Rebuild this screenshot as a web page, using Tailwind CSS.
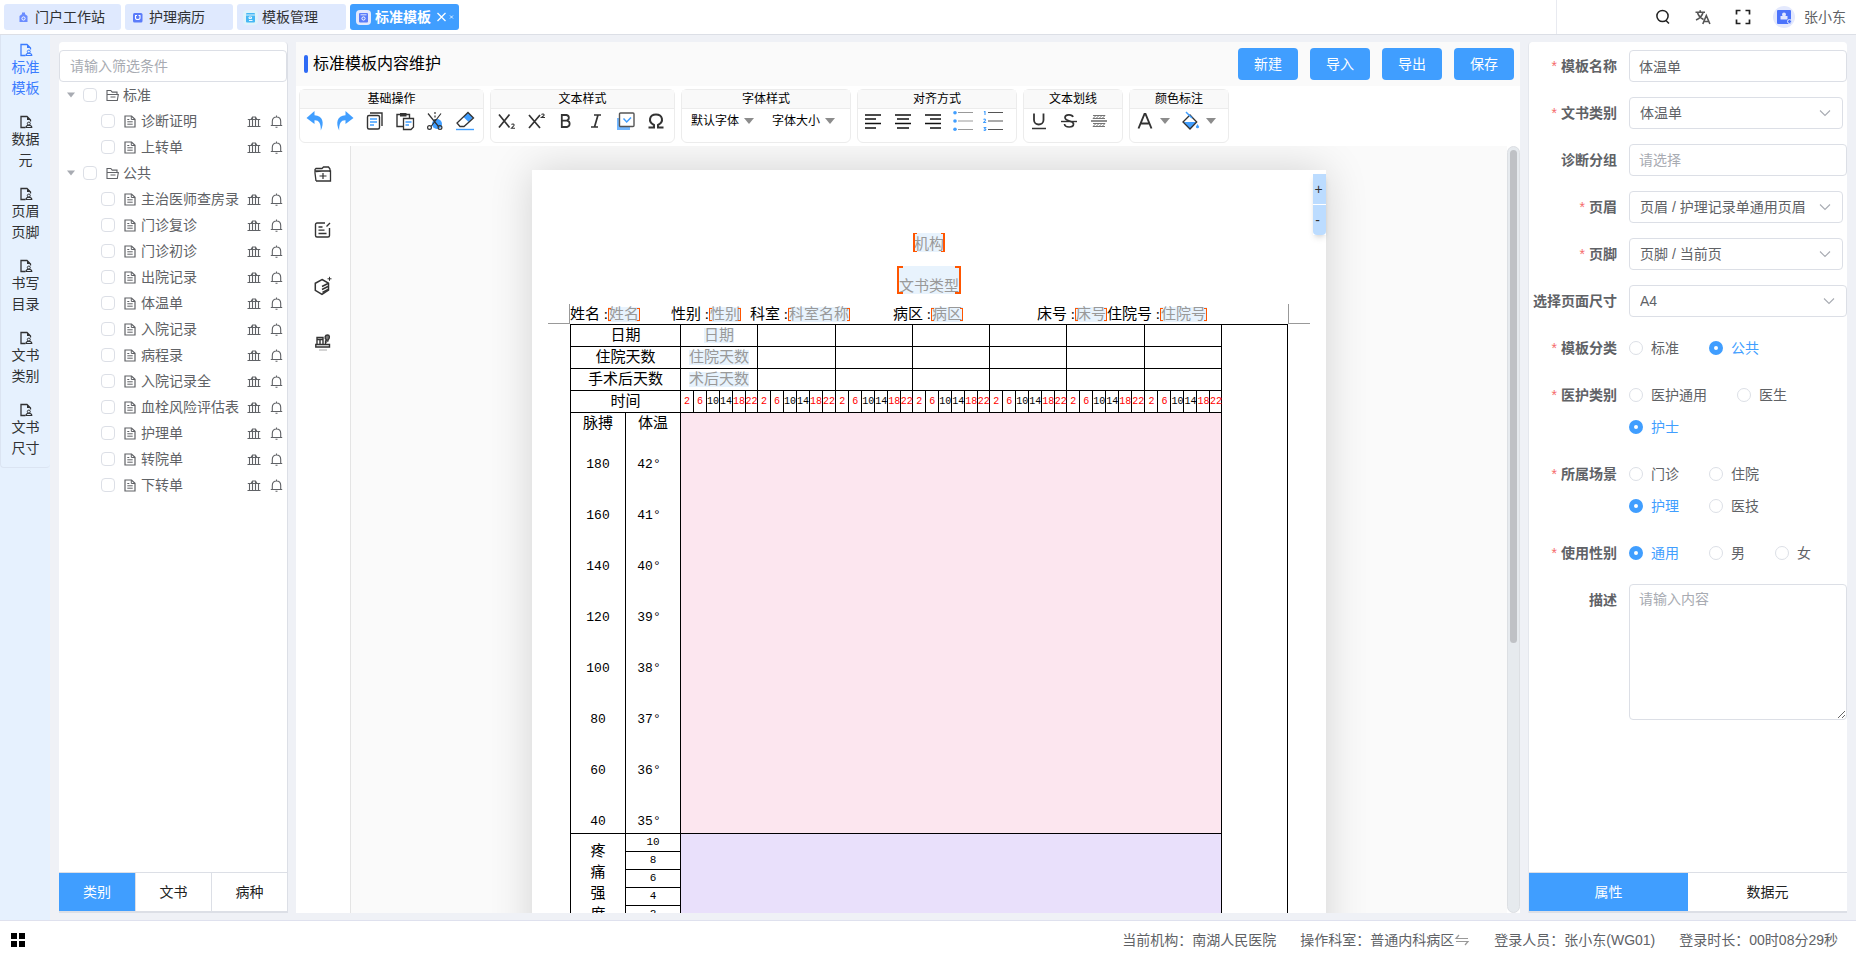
<!DOCTYPE html>
<html lang="zh-CN">
<head>
<meta charset="utf-8">
<title>标准模板</title>
<script src="https://cdn.jsdelivr.net/npm/@tailwindcss/browser@4"></script>
</head>
<body class="flex h-screen flex-col overflow-hidden bg-[#eff1f6] font-['Liberation_Sans','Noto_Sans_CJK_SC',sans-serif] text-sm text-[#606266]">

<svg class="hidden" aria-hidden="true">
  <symbol id="i-nav" viewBox="0 0 14 14"><path d="M6.500 12.500H2V1.500H8L11.500 5V6.500" fill="none" stroke="currentColor" stroke-width="1.300"/><path d="M8 1.500V5h3.500z" fill="currentColor"/><circle cx="9.800" cy="8.600" r="1.500" fill="none" stroke="currentColor"/><path d="M7 12.500h5.800c0-1.500-1-2.200-3-2.200s-2.800.7-2.800 2.200z" fill="none" stroke="currentColor" stroke-width="1.100"/></symbol>
  <symbol id="i-folder" viewBox="0 0 13 13"><path d="M1 11.500V1.500h3.800l1.400 1.600h4.800V5M1 11.500V5.500H12.300L11.300 11.500zM4.500 8h5" fill="none" stroke="currentColor" stroke-width="1.100"/></symbol>
  <symbol id="i-doc" viewBox="0 0 12 13"><path d="M1 1h6.500L11 4.300V12H1z" fill="none" stroke="currentColor" stroke-width="1.200"/><path d="M7.300 1v3.500H11M3.300 4.500h2M3.300 6.800h5.400M3.300 9.200h5.400" fill="none" stroke="currentColor"/></symbol>
  <symbol id="i-bank" viewBox="0 0 14 13"><path d="M0.500 11.500h13M0.800 4.500h12.400M2.500 4.500v7M5.500 2.500v9M8.500 2.500v9M11.500 4.500v7M4 4.500L5.500 2h3L10 4.500" fill="none" stroke="currentColor" stroke-width="1.100"/></symbol>
  <symbol id="i-bell" viewBox="0 0 13 13"><path d="M0.800 10.500h11.400M2.300 10.500V6.500C2.300 3.500 4 2 6.500 2s4.200 1.500 4.200 4.500v4M6.500 0.500V2M5.500 12.300h2" fill="none" stroke="currentColor" stroke-width="1.100"/></symbol>
  <symbol id="i-chev" viewBox="0 0 12 12"><path d="M1 3.500l5 5 5-5" fill="none" stroke="#a8abb2" stroke-width="1.100"/></symbol>
  <symbol id="i-tri" viewBox="0 0 10 6"><path d="M0 0h10L5 6z" fill="#8c8c8c"/></symbol>
</svg>

<header class="flex h-[35px] shrink-0 items-center border-b border-[#dcdfe6] bg-white">
  <nav class="flex grow gap-1 self-stretch px-1 pt-1 pb-1 text-[#303133]">
    <a href="#" class="flex h-[26px] items-center gap-1 rounded-[3px] bg-[#dfe9fe] pr-4 pl-3"><svg class="size-[15px]" viewBox="0 0 15 15"><path d="M7.500 3L11.500 6V12H3.500V6z" fill="#6b8cff"/><rect x="6" y="2.500" width="3" height="2" fill="#6b8cff"/><circle cx="7.500" cy="8.500" r="1.600" fill="none" stroke="#fff"/></svg>门户工作站</a>
    <a href="#" class="flex h-[26px] items-center gap-1 rounded-[3px] bg-[#dfe9fe] pr-7 pl-[5px]"><svg class="size-[15px]" viewBox="0 0 15 15"><rect x="3" y="3" width="9.500" height="9.500" rx="1.500" fill="#5b7cfa"/><path d="M5.500 6v2c0 2 4.500 2 4.500 0V6M5 5.500h2M8.500 5.500h2" fill="none" stroke="#fff" stroke-width="1.100"/></svg>护理病历</a>
    <a href="#" class="flex h-[26px] items-center gap-1 rounded-[3px] bg-[#dfe9fe] pr-7 pl-1.5"><svg class="size-[15px]" viewBox="0 0 15 15"><rect width="15" height="15" rx="4" fill="#dff3fb"/><rect x="3" y="3" width="9" height="9.500" rx="1" fill="#45b8f5"/><path d="M3 5h9" stroke="#dff3fb"/><path d="M6 7h2.500v1.500H6zM6 10.500h3.500" fill="none" stroke="#fff" stroke-width=".9"/></svg>模板管理</a>
    <a href="#" aria-current="page" class="flex h-[26px] w-[109px] items-center gap-1 rounded-[3px] bg-[#409eff] pl-1.5 font-bold whitespace-nowrap text-white"><svg class="size-[15px] shrink-0" viewBox="0 0 15 15"><rect width="15" height="15" rx="4" fill="#e4e9fd"/><rect x="3" y="3" width="9" height="9.500" rx="1" fill="#5b7cfa"/><path d="M4.500 4.800h6" stroke="#fff" stroke-width=".8"/><circle cx="7.500" cy="8.500" r="1.600" fill="none" stroke="#fff"/></svg>标准模板<svg class="h-3 w-5 shrink-0" viewBox="0 0 20 12"><path d="M2.500 2l8 8M10.500 2l-8 8" stroke="#fff" stroke-width="1.300"/><path d="M15 4.500l3 3M18 4.500l-3 3" stroke="#fff" stroke-width=".8"/></svg></a>
  </nav>
  <div class="flex w-[300px] items-center gap-3 self-stretch border-l border-[#e8eaf0] pr-[10px] text-[#222]">
    <button aria-label="搜索" class="ml-auto flex w-7 justify-center"><svg class="size-4" viewBox="0 0 16 16"><circle cx="7.500" cy="7" r="5.600" fill="none" stroke="currentColor" stroke-width="1.500"/><path d="M11 11.500l3 3" stroke="currentColor" stroke-width="1.500"/></svg></button>
    <button aria-label="语言" class="flex w-7 justify-center text-[#555]"><svg class="size-4" viewBox="0 0 16 16"><path d="M0.500 3.200h9.500M5.200 1.200v2M2.500 3.500c.8 3 3 5.500 6 7M8 3.500C7.200 7 4.500 9.500 1 11M7.800 15l3.500-8.500L14.900 15M9 12.500h4.800" fill="none" stroke="currentColor" stroke-width="1.600"/></svg></button>
    <button aria-label="全屏" class="flex w-7 justify-center"><svg class="size-4" viewBox="0 0 16 16"><path d="M1.500 5.500v-4h4M10.500 1.500h4v4M14.500 10.500v4h-4M5.500 14.500h-4v-4" fill="none" stroke="currentColor" stroke-width="1.700"/></svg></button>
    <button class="flex items-center gap-[9px] pl-1 text-[#606266]"><svg class="size-[22px]" viewBox="0 0 22 22"><circle cx="11" cy="11" r="11" fill="#e4e9fd"/><rect x="4" y="4" width="14" height="14" rx="1" fill="#4b73fb"/><path d="M7.500 13.500h7V10H7.500z" fill="#dfe6ff"/><circle cx="11" cy="8.500" r="2" fill="#dfe6ff"/><circle cx="16.500" cy="15.500" r="2" fill="#4b73fb" stroke="#dfe6ff"/></svg>张小东</button>
  </div>
</header>

<div class="flex min-h-0 grow">
  <!-- 左侧模块导航 -->
  <nav class="w-[50px] shrink-0 bg-[#e6f1fe] text-[#303133]">
    <ul id="modules" class="flex flex-col gap-4 rounded-b border-b border-l border-[#dbe4f2] pt-2 pb-2 text-center leading-[21px]"></ul>
  </nav>

  <div class="flex min-w-0 grow py-[7px] pr-[9px] pl-[9px]">
    <!-- 模板树 -->
    <aside class="mr-2 flex w-[229px] shrink-0 flex-col rounded-t border-r border-[#dcdfe6] bg-white">
      <input aria-label="筛选" placeholder="请输入筛选条件" class="mt-2 h-8 w-full rounded border border-[#dcdfe6] bg-white px-[10px] text-sm placeholder:text-[#a8abb2]">
      <ul id="tree" class="grow"></ul>
      <div class="grid h-[41px] grid-cols-3 border-t border-b-2 border-[#dcdfe6] text-[#222]">
        <button class="bg-[#409eff] text-white">类别</button>
        <button class="border-l border-[#dcdfe6]">文书</button>
        <button class="border-l border-[#dcdfe6]">病种</button>
      </div>
    </aside>

    <!-- 编辑区 -->
    <main class="mr-2 flex min-w-0 grow flex-col bg-white text-black">
      <div class="flex h-11 shrink-0 items-center gap-3 bg-[#fafafa] pr-1.5 pl-2">
        <h1 class="flex grow items-center gap-[5px] text-base"><span class="h-[18px] w-1 rounded-sm bg-[#2f6bf5]"></span>标准模板内容维护</h1>
        <button class="h-8 w-[60px] rounded bg-[#409eff] text-white">新建</button>
        <button class="h-8 w-[60px] rounded bg-[#409eff] text-white">导入</button>
        <button class="h-8 w-[60px] rounded bg-[#409eff] text-white">导出</button>
        <button class="h-8 w-[60px] rounded bg-[#409eff] text-white">保存</button>
      </div>

      <div class="flex h-[60px] shrink-0 gap-1.5 px-[3px] pt-[3px] pb-[3px] text-xs text-[#333]">
        <section class="w-[185px] rounded-md border border-[#ececec]">
          <h2 class="h-[19px] border-b border-[#ececec] bg-[#f9f9f9] text-center leading-[18px] text-black">基础操作</h2>
          <div class="grid h-6 w-[180px] grid-cols-6 place-items-center">
            <button aria-label="撤销"><svg class="size-5" viewBox="0 0 20 20"><path d="M9.500 0L1.500 7l8 6V9.200c4.500-.2 6.500 3 6.300 10.300C19.500 12 18 4.500 9.500 4.200z" fill="#409eff"/></svg></button>
            <button aria-label="重做"><svg class="size-5" viewBox="0 0 20 20"><path d="M10.500 0l8 7-8 6V9.200c-4.500-.2-6.500 3-6.300 10.300C.5 12 2 4.500 10.500 4.200z" fill="#409eff"/></svg></button>
            <button aria-label="复制"><svg class="size-5" viewBox="0 0 20 20"><rect x="2.500" y="4.500" width="12" height="13.500" rx="1.500" fill="#fff" stroke="#333" stroke-width="1.400"/><path d="M5 2h12v13" fill="none" stroke="#333" stroke-width="1.400"/><path d="M5 8h7M5 11h7M5 14h4" stroke="#409eff" stroke-width="1.400"/></svg></button>
            <button aria-label="粘贴"><svg class="size-5" viewBox="0 0 20 20"><path d="M8 15.500H2V3.500H14.500V7M5 3.500h6" fill="none" stroke="#333" stroke-width="1.400"/><path d="M5 2h6.500v3.500H5z" fill="#333"/><path d="M8.500 7.500H18.500V16l-2.500 2.500H8.500z" fill="#fff" stroke="#333" stroke-width="1.300"/><path d="M10.500 11h6M10.500 14h3.500" stroke="#409eff" stroke-width="1.400"/></svg></button>
            <button aria-label="剪切"><svg class="size-5" viewBox="0 0 20 20"><circle cx="12" cy="13" r="5" fill="#409eff"/><path d="M3 2.500l10.500 13M16 2.500L6 15.500M10 1v2M10 4.500v2M10 8v2" fill="none" stroke="#333" stroke-width="1.200"/><circle cx="4.500" cy="16.500" r="1.900" fill="none" stroke="#333" stroke-width="1.200"/><circle cx="15" cy="16.500" r="1.900" fill="none" stroke="#333" stroke-width="1.200"/></svg></button>
            <button aria-label="橡皮擦"><svg class="size-5" viewBox="0 0 20 20"><path d="M8.500 6L13 1.500l5 5-4.500 4.500z" fill="#409eff"/><path d="M13 1.500l5.500 5.500L9 15.500H5L2 12z" fill="none" stroke="#333" stroke-width="1.300"/><path d="M1 18.500h18" stroke="#409eff" stroke-width="1.400"/></svg></button>
          </div>
        </section>
        <section class="w-[185px] rounded-md border border-[#ececec]">
          <h2 class="h-[19px] border-b border-[#ececec] bg-[#f9f9f9] text-center leading-[18px] text-black">文本样式</h2>
          <div class="grid h-6 w-[180px] grid-cols-6 place-items-center">
            <button aria-label="下标"><svg class="size-5" viewBox="0 0 20 20"><path d="M3 3.500l10.500 13M13.500 3.500L3 16.500" stroke="#333" stroke-width="1.700"/><path d="M15.500 13.500c1-1 3-.5 2.500 1l-2.500 2.700H19" fill="none" stroke="#333" stroke-width="1.100"/></svg></button>
            <button aria-label="上标"><svg class="size-5" viewBox="0 0 20 20"><path d="M3 4l11 13M14 4L3 17" stroke="#333" stroke-width="1.700"/><path d="M15.500 3.500c1-1 3-.5 2.500 1l-2.500 2H19" fill="none" stroke="#333" stroke-width="1.100"/></svg></button>
            <button aria-label="加粗"><svg class="size-5" viewBox="0 0 20 20"><path d="M5.800 4v12H11a3.200 3.200 0 0 0 0-6.300H5.800 10.500a2.900 2.900 0 0 0 0-5.700z" fill="none" stroke="#333" stroke-width="1.800"/></svg></button>
            <button aria-label="斜体"><svg class="size-5" viewBox="0 0 20 20"><path d="M8 4h7M5 16h7M12 4L8.500 16" stroke="#333" stroke-width="1.700"/></svg></button>
            <button aria-label="复选框"><svg class="size-5" viewBox="0 0 20 20"><path d="M1 7h3v9h10v3H1z" fill="#73b7ff"/><rect x="3.500" y="2" width="14.500" height="13.500" rx="1" fill="#fff" stroke="#555" stroke-width="1.400"/><path d="M7.500 7.500l3.200 3.500L15 6.500" fill="none" stroke="#409eff" stroke-width="1.500"/></svg></button>
            <button aria-label="特殊字符"><svg class="size-5" viewBox="0 0 20 20"><path d="M2.500 16.500H8v-2.500C1.500 10.500 3.500 3.500 10 3.500s8.500 7 2 10.500v2.500h5.500" fill="none" stroke="#333" stroke-width="2"/></svg></button>
          </div>
        </section>
        <section class="w-[170px] rounded-md border border-[#ececec]">
          <h2 class="h-[19px] border-b border-[#ececec] bg-[#f9f9f9] text-center leading-[18px] text-black">字体样式</h2>
          <div class="flex h-6 items-center gap-[18px] pl-[9px] whitespace-nowrap text-black">
            <button class="flex items-center gap-[5px]">默认字体<svg class="h-1.5 w-2.5"><use href="#i-tri"/></svg></button>
            <button class="flex items-center gap-[5px]">字体大小<svg class="h-1.5 w-2.5"><use href="#i-tri"/></svg></button>
          </div>
        </section>
        <section class="w-[160px] rounded-md border border-[#ececec]">
          <h2 class="h-[19px] border-b border-[#ececec] bg-[#f9f9f9] text-center leading-[18px] text-black">对齐方式</h2>
          <div class="grid h-6 w-[150px] grid-cols-5 place-items-center">
            <button aria-label="左对齐"><svg class="size-5" viewBox="0 0 20 20"><path d="M2 4h16M2 8h11M2 12.500h16M2 17h11" stroke="#111" stroke-width="1.600"/></svg></button>
            <button aria-label="居中"><svg class="size-5" viewBox="0 0 20 20"><path d="M2 4h16M4 8h12M2 12.500h16M4 17h12" stroke="#111" stroke-width="1.600"/></svg></button>
            <button aria-label="右对齐"><svg class="size-5" viewBox="0 0 20 20"><path d="M2 4h16M7 8h11M2 12.500h16M7 17h11" stroke="#111" stroke-width="1.600"/></svg></button>
            <button aria-label="无序列表"><svg class="size-5" viewBox="0 0 20 20"><path d="M5 1.500h15M5 10h15M5 18.500h15" stroke="#999" stroke-width="1.200"/><circle cx="2" cy="1.800" r="1.800" fill="#409eff"/><circle cx="2" cy="10" r="1.800" fill="#409eff"/><circle cx="2" cy="18.200" r="1.800" fill="#409eff"/></svg></button>
            <button aria-label="有序列表"><svg class="size-5" viewBox="0 0 20 20"><path d="M5 1.500h15M5 10h15M5 18.500h15" stroke="#555" stroke-width="1.200"/><path d="M1 1l1-.8V4M.5 8.500c1-.8 2.500 0 1.800 1L.7 11.500h2.500M.6 16.500h2l-1 1.200c2 .2 1.500 2-.9 1.600" fill="none" stroke="#409eff" stroke-width="1.100"/></svg></button>
          </div>
        </section>
        <section class="w-[100px] rounded-md border border-[#ececec]">
          <h2 class="h-[19px] border-b border-[#ececec] bg-[#f9f9f9] text-center leading-[18px] text-black">文本划线</h2>
          <div class="grid h-6 w-[90px] grid-cols-3 place-items-center">
            <button aria-label="下划线"><svg class="size-5" viewBox="0 0 20 20"><path d="M5 2.500v6.500c0 6 9.500 6 9.500 0V2.500" fill="none" stroke="#333" stroke-width="1.800"/><path d="M3 17.500h14" stroke="#333" stroke-width="1.500"/></svg></button>
            <button aria-label="删除线"><svg class="size-5" viewBox="0 0 20 20"><path d="M14 6c-.8-3-8-3-8 .6C6 11 14.500 9 14.500 13c0 4-8.500 4-9 0" fill="none" stroke="#333" stroke-width="1.700"/><path d="M2 10.500h16" stroke="#333" stroke-width="1.400"/></svg></button>
            <button aria-label="双删除线"><svg class="size-5" viewBox="0 0 20 20"><path d="M2 10h16" stroke="#444" stroke-width="1.200"/><path d="M4 7.500l3-3M7 7.500l3-3M10 7.500l3-3M13 7.500l3-3M4 15.500l3-3M7 15.500l3-3M10 15.500l3-3M13 15.500l3-3M4 4.500h12M4 15.500h12M4 7.500h12M4 12.500h12" stroke="#666" stroke-width=".9"/></svg></button>
          </div>
        </section>
        <section class="w-[100px] rounded-md border border-[#ececec]">
          <h2 class="h-[19px] border-b border-[#ececec] bg-[#f9f9f9] text-center leading-[18px] text-black">颜色标注</h2>
          <div class="flex h-6 items-center gap-[11px] pl-[5px]">
            <button aria-label="文字颜色" class="flex items-center gap-[5px]"><svg class="size-5" viewBox="0 0 20 20"><path d="M3.500 17.500L9.500 3h1L16.500 17.500M6 12.500h8" fill="none" stroke="#333" stroke-width="1.900"/></svg><svg class="h-1.5 w-2.5"><use href="#i-tri"/></svg></button>
            <button aria-label="背景颜色" class="flex items-center gap-[5px]"><svg class="size-5" viewBox="0 0 20 20"><path d="M2.500 11h13L9 18z" fill="#409eff"/><path d="M9 4l6.700 7L9 18 2 11z" fill="none" stroke="#333" stroke-width="1.300"/><path d="M5 1l6 6" stroke="#409eff" stroke-width="1.500"/><path d="M16.500 13l1.600 2.700a1.600 1.600 0 1 1-3.200 0z" fill="#409eff"/></svg><svg class="h-1.5 w-2.5"><use href="#i-tri"/></svg></button>
          </div>
        </section>
      </div>

      <div class="flex min-h-0 grow">
        <nav class="flex w-[55px] shrink-0 flex-col items-center gap-9 border-r border-[#e4e4e4] pt-[18px] text-[#333]">
          <button aria-label="文件夹"><svg class="size-5" viewBox="0 0 20 20"><path d="M3 17L2 9V5.500L3 4.500H9l1.500-1.500h5L17 5v3M3 17H17.500V7H2M9 7l-6 .5" fill="none" stroke="currentColor" stroke-width="1.300"/><path d="M10 9v6M6.500 12h7" stroke="currentColor" stroke-width="1.200"/></svg></button>
          <button aria-label="编辑"><svg class="size-5" viewBox="0 0 20 20"><path d="M12 3H4a1.500 1.500 0 0 0-1.500 1.500v11A1.500 1.500 0 0 0 4 17h11a1.500 1.500 0 0 0 1.500-1.500V8M13.500 6.500L17 3" fill="none" stroke="currentColor" stroke-width="1.400"/><path d="M5.500 7h4M5.500 10.200h6M5.500 13.500h8" stroke="currentColor" stroke-width="1.300"/></svg></button>
          <button aria-label="组件"><svg class="size-5" viewBox="0 0 20 20"><path d="M9 3.500l6.500 3.700v7L9 18.300l-6.700-4v-7z" fill="none" stroke="currentColor" stroke-width="1.500"/><path d="M9 10.500L15 7.500M9 13.500l6-3M9.500 16.500l5.500-3" stroke="currentColor" stroke-width="1.500"/><path d="M16.500.8v4M14.500 2.800h4" stroke="currentColor"/></svg></button>
          <button aria-label="签章"><svg class="size-5" viewBox="0 0 20 20"><path d="M4 12V5.500H10V12M2.800 15V12.500H16.500V15zM4 7.500H10M7 7.500V12" fill="none" stroke="currentColor" stroke-width="1.400"/><path d="M12.500 12V9l1-1C11 6 12 3 14.500 3s2.500 3 .5 5v1.500" fill="#777" stroke="currentColor" stroke-width="1.300"/><path d="M6 18h8" stroke="#aaa"/></svg></button>
        </nav>

        <div class="flex min-w-0 grow justify-center overflow-hidden bg-[#fafafa] pt-6">
          <article class="relative h-[1123px] w-[794px] shrink-0 bg-white px-[38px] pt-[63px] font-['Liberation_Serif','Noto_Sans_CJK_SC',serif] text-[15px] shadow-[0_0_40px_rgba(0,0,0,0.16)]">
            <div class="absolute top-1 right-0 flex flex-col gap-px font-['Liberation_Sans','Noto_Sans_CJK_SC',sans-serif] text-sm text-[#333] shadow-md">
              <button aria-label="放大" class="h-[30px] w-[13px] bg-[#bcdcff] pr-0.5">+</button>
              <button aria-label="缩小" class="h-[30px] w-[13px] rounded-b bg-[#bcdcff] pr-1">-</button>
            </div>
            <div class="flex flex-col items-center text-[#999]">
              <span class="relative flex h-[19px] items-end bg-[#e8f3fd] px-px leading-[15px]"><i class="absolute inset-y-0 left-0 w-1 border-y border-l-2 border-[#ff5500]"></i>机构<i class="absolute inset-y-0 right-0 w-1 border-y border-r-2 border-[#ff5500]"></i></span>
              <span class="relative mt-[14px] flex h-[28px] items-end bg-[#e8f3fd] px-0.5 leading-[15px]"><i class="absolute inset-y-0 left-0 w-1.5 border-y-2 border-l-2 border-[#ff5500]"></i>文书类型<i class="absolute inset-y-0 right-0 w-1.5 border-y-2 border-r-2 border-[#ff5500]"></i></span>
            </div>
            <div class="relative mt-[10px] h-5">
              <i class="absolute bottom-0 -left-[22px] h-5 w-[22px] border-r border-b border-[#999]"></i>
              <i class="absolute -right-[22px] bottom-0 h-5 w-[22px] border-b border-l border-[#999]"></i>
              <div id="fields" class="grid grid-cols-[101px_79px_143px_144px_70px_1fr] leading-5"></div>
            </div>
            <table class="w-[718px] table-fixed border-collapse text-center leading-[21px]">
              <colgroup id="cols"></colgroup>
              <tbody id="sheet"></tbody>
            </table>
          </article>
        </div>
        <div class="w-[13px] shrink-0 rounded-full border border-[#dcdfe3] bg-[#e6eaee] px-0.5 py-[3px]"><div class="h-[65%] w-full rounded-full bg-[#bfc1c5]"></div></div>
      </div>
    </main>

    <!-- 属性面板 -->
    <aside class="flex w-[319px] shrink-0 flex-col rounded-t border-l border-[#e4e7ed] bg-white">
      <form id="props" class="flex grow flex-col gap-[15px] pt-2"></form>
      <div class="grid h-[41px] grid-cols-2 border-t border-b-2 border-[#dcdfe6] text-[#222]">
        <button class="bg-[#409eff] text-white">属性</button>
        <button>数据元</button>
      </div>
    </aside>
  </div>
</div>

<footer class="flex h-[39px] shrink-0 items-center gap-6 border-t border-[#dfe1ee] bg-white pr-[18px] pl-[11px]">
  <button aria-label="菜单" class="mr-auto grid grid-cols-2 gap-0.5"><i class="size-1.5 bg-black"></i><i class="size-1.5 bg-black"></i><i class="size-1.5 bg-black"></i><i class="size-1.5 bg-black"></i></button>
  <span>当前机构：南湖人民医院</span>
  <span class="flex items-center">操作科室：普通内科病区<svg class="h-3 w-4" viewBox="0 0 16 12"><path d="M5 1L2 4.500h12M2 7.500h12L11 11" fill="none" stroke="#999" stroke-width="1.200"/></svg></span>
  <span>登录人员：张小东(WG01)</span>
  <span>登录时长：00时08分29秒</span>
</footer>

<script>
const $ = id => document.getElementById(id);

$('modules').innerHTML = ['标准|模板', '数据|元', '页眉|页脚', '书写|目录', '文书|类别', '文书|尺寸'].map((m, i) => {
  const [a, b] = m.split('|');
  return `<li><a href="#" class="flex flex-col items-center ${i ? '' : 'text-[#3b7cff]'}"><svg class="size-[14px] shrink-0"><use href="#i-nav"/></svg><span>${a}<br>${b}</span></a></li>`;
}).join('');

const tree = [['标准', ['诊断证明', '上转单']], ['公共', ['主治医师查房录', '门诊复诊', '门诊初诊', '出院记录', '体温单', '入院记录', '病程录', '入院记录全', '血栓风险评估表', '护理单', '转院单', '下转单']]];
const box = t => `<input type="checkbox" aria-label="${t}" class="size-[14px] shrink-0 appearance-none rounded-sm border border-[#dcdfe6] bg-white">`;
$('tree').innerHTML = tree.map(([g, kids]) => `<li>
  <div class="flex h-[26px] items-center pl-2"><svg class="mr-2 h-1.5 w-2" viewBox="0 0 8 6"><path d="M0 .5h8L4 5.500z" fill="#a8abb2"/></svg>${box(g)}<svg class="mr-1 ml-[9px] size-[13px]"><use href="#i-folder"/></svg>${g}</div>
  <ul>${kids.map(k => `<li class="flex h-[26px] items-center pr-1 pl-[42px]">${box(k)}<svg class="mr-[5px] ml-[9px] h-[13px] w-3 shrink-0"><use href="#i-doc"/></svg><span class="grow whitespace-nowrap">${k}</span><svg class="mr-[9px] h-[13px] w-[14px] shrink-0"><use href="#i-bank"/></svg><svg class="size-[13px] shrink-0"><use href="#i-bell"/></svg></li>`).join('')}</ul></li>`).join('');

$('fields').innerHTML = [['姓名', '姓名'], ['性别', '性别'], ['科室', '科室名称'], ['病区', '病区'], ['床号', '床号'], ['住院号', '住院号']].map(([l, v]) =>
  `<div class="flex items-center whitespace-nowrap"><span>${l} :</span><span class="relative bg-[#e8f3fd] px-px leading-[15px] text-[#999]"><i class="absolute inset-y-px left-0 w-[3px] border-y border-l border-[#ff5500]"></i>${v}<i class="absolute inset-y-px right-0 w-[3px] border-y border-r border-[#ff5500]"></i></span></div>`).join('');

const dayWidths = [77, 78, 77, 77, 77, 78, 77];
$('cols').innerHTML = [55, 55, ...dayWidths.flatMap(w => [13, 13, 13, 13, 13, w - 65]), 66].map(w => `<col style="width:${w}px">`).join('');
const tail = n => `<td rowspan="${n}" class="border border-black"></td>`;
const hint = t => `<span class="inline-block bg-[#e8f3fd] leading-[15px] text-[#999]">${t}</span>`;
const head = (t, h, last) => `<tr class="h-[22px]"><td colspan="2" class="border border-black p-0">${t}</td>${dayWidths.map((_, i) => `<td colspan="6" class="border border-black p-0">${i ? '' : hint(h)}</td>`).join('')}${last}</tr>`;
const hours = dayWidths.map(() => [2, 6, 10, 14, 18, 22].map(h => `<td class="border border-black p-0 font-['Liberation_Mono',monospace] text-[10px] leading-[21px] ${h === 10 || h === 14 ? '' : 'text-[#f00]'}"><div class="flex justify-center">${h}</div></td>`).join('')).join('');
const scale = (title, vals, cls) => `<td class="border border-black p-0 align-top leading-5"><div class="flex h-[62px] flex-col justify-between"><span>${title}</span><span class="font-['Liberation_Mono',monospace] text-[13px] ${cls}">${vals[0]}</span></div>${vals.slice(1).map(v => `<div class="flex h-[51px] items-end justify-center font-['Liberation_Mono',monospace] text-[13px] ${cls}">${v}</div>`).join('')}</td>`;
const pain = [10, 8, 6, 4, 2, 0];
$('sheet').innerHTML =
  head('日期', '日期', tail(11)) + head('住院天数', '住院天数', '') + head('手术后天数', '术后天数', '') +
  `<tr class="h-[22px]"><td colspan="2" class="border border-black p-0">时间</td>${hours}</tr>` +
  `<tr class="h-[421px]">${scale('脉搏', [180, 160, 140, 120, 100, 80, 60, 40], '')}${scale('体温', ['42°', '41°', '40°', '39°', '38°', '37°', '36°', '35°'], 'pr-2')}<td colspan="42" class="border border-black bg-[#fce6ef] p-0"></td></tr>` +
  pain.map((p, i) => `<tr class="h-[18px]">${i ? '' : '<td rowspan="6" class="border border-black p-0 pt-[7px] align-top leading-[21px]">疼<br>痛<br>强<br>度</td>'}<td class="border border-black p-0 font-['Liberation_Mono',monospace] text-[11px] leading-[17px]">${p}</td>${i ? '' : '<td colspan="42" rowspan="6" class="border border-black bg-[#e9e0fb] p-0"></td>'}</tr>`).join('');

const field = (label, req, body, id) => `<div class="flex"><label ${id ? `for="${id}"` : ''} class="mr-3 h-8 w-[88px] shrink-0 text-right leading-8 font-bold whitespace-nowrap">${req ? '<span class="mr-1 font-normal text-[#f56c6c]">*</span>' : ''}${label}</label>${body}</div>`;
const text = (id, v, ph) => `<input id="${id}" value="${v}" placeholder="${ph}" class="h-8 min-w-0 grow rounded border border-[#dcdfe6] px-[9px] text-sm placeholder:text-[#a8abb2]">`;
const pick = (id, v, wide) => `<div class="relative grow ${wide ? '' : 'mr-1'}"><select id="${id}" class="h-8 w-full appearance-none rounded border border-[#dcdfe6] bg-white pl-[10px] text-sm"><option>${v}</option></select><svg class="pointer-events-none absolute top-[10px] right-3 size-3"><use href="#i-chev"/></svg></div>`;
const radios = (name, opts, on) => `<div class="flex min-w-0 grow flex-wrap gap-x-[30px] pr-8">${opts.map(o => `<label class="flex h-8 items-center gap-2 ${o === on ? 'text-[#409eff]' : ''}"><input type="radio" name="${name}" ${o === on ? 'checked' : ''} class="size-[14px] appearance-none rounded-full border border-[#dcdfe6] checked:border-[5px] checked:border-[#409eff]">${o}</label>`).join('')}</div>`;
$('props').innerHTML =
  field('模板名称', 1, text('f1', '体温单', ''), 'f1') +
  field('文书类别', 1, pick('f2', '体温单'), 'f2') +
  field('诊断分组', 0, text('f3', '', '请选择'), 'f3') +
  field('页眉', 1, pick('f4', '页眉 / 护理记录单通用页眉'), 'f4') +
  field('页脚', 1, pick('f5', '页脚 / 当前页'), 'f5') +
  field('选择页面尺寸', 0, pick('f6', 'A4', 1), 'f6') +
  field('模板分类', 1, radios('r1', ['标准', '公共'], '公共')) +
  field('医护类别', 1, radios('r2', ['医护通用', '医生', '护士'], '护士')) +
  field('所属场景', 1, radios('r3', ['门诊', '住院', '护理', '医技'], '护理')) +
  field('使用性别', 1, radios('r4', ['通用', '男', '女'], '通用')) +
  field('描述', 0, '<textarea id="f7" placeholder="请输入内容" class="h-[136px] min-w-0 grow rounded border border-[#dcdfe6] px-[9px] py-1 text-sm placeholder:text-[#a8abb2]"></textarea>', 'f7');
</script>
</body>
</html>
